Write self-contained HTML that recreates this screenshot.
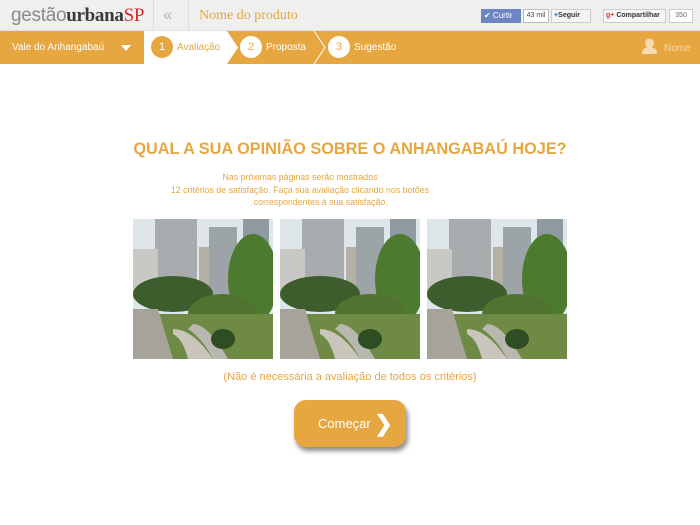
<!DOCTYPE html>
<html><head><meta charset="utf-8"><style>
*{margin:0;padding:0;box-sizing:border-box}
body{width:700px;height:525px;overflow:hidden;background:#fff;font-family:"Liberation Sans",sans-serif;position:relative}
.top{position:absolute;left:0;top:0;width:700px;height:31px;background:#efefef;border-bottom:1px solid #e2e2e2}
.bar{position:absolute;left:0;top:31px;width:700px;height:33px;background:#e6a640}
.abs{position:absolute;white-space:nowrap}
.circ{position:absolute;width:22px;height:22px;border-radius:50%;font-size:11px;text-align:center;line-height:22px}
.photo{position:absolute;top:219px;width:140px;height:140px}
</style></head><body>
<div class="top"></div>
<div class="abs" style="left:11px;top:5px;font-size:19px;letter-spacing:-0.3px"><span style="color:#8a8a8a">gestão</span><span style="color:#3a3a3a;font-family:'Liberation Serif',serif;font-weight:bold">urbana</span><span style="color:#d22a2a;font-family:'Liberation Serif',serif">SP</span></div>
<div class="abs" style="left:153px;top:0;width:1px;height:31px;background:#ddd"></div>
<div class="abs" style="left:163px;top:5px;font-size:17px;color:#c4c4c4;font-weight:bold">«</div>
<div class="abs" style="left:188px;top:0;width:1px;height:31px;background:#ddd"></div>
<div class="abs" style="left:199px;top:8px;font-size:14px;color:#e6a640;font-family:'Liberation Serif',serif">Nome do produto</div>
<div class="abs" style="left:481px;top:9px;width:40px;height:14px;background:#6d86c3;color:#fff;font-size:8px;line-height:14px;padding-left:3px">✔ Curtir</div>
<div class="abs" style="left:523px;top:9px;width:26px;height:14px;border:1px solid #bbb;background:#fff;font-size:7px;line-height:12px;text-align:center;color:#444">43 mil</div>
<div class="abs" style="left:551px;top:9px;width:40px;height:14px;border:1px solid #ccc;background:#f4f4f4;font-size:7px;line-height:12px;font-weight:bold;color:#333;padding-left:2px"><span style="color:#3aa3e3">♥</span>Seguir</div>
<div class="abs" style="left:603px;top:9px;width:63px;height:14px;border:1px solid #ccc;background:#f6f6f6;font-size:7px;line-height:12px;font-weight:bold;color:#333;padding-left:2px"><span style="color:#d33">g+</span> Compartilhar</div>
<div class="abs" style="left:669px;top:9px;width:24px;height:14px;border:1px solid #ccc;background:#fff;font-size:7px;line-height:12px;text-align:center;color:#666">350</div>
<div class="bar"></div>
<div class="abs" style="left:12px;top:42px;font-size:10px;color:#fff">Vale do Anhangabaú</div>
<div class="abs" style="left:121px;top:45px;width:0;height:0;border-left:5px solid transparent;border-right:5px solid transparent;border-top:6px solid #fff"></div>
<svg class="abs" style="left:144px;top:31px" width="200" height="33"><polygon points="0,0 83,0 94,16.5 83,33 0,33" fill="#fff"/><polyline points="170,0 181,16.5 170,33" fill="none" stroke="#fff" stroke-width="1"/></svg>
<div class="circ" style="left:151px;top:36px;background:#e6a640;color:#fff">1</div>
<div class="abs" style="left:177px;top:42px;font-size:10px;color:#e6a640">Avaliação</div>
<div class="circ" style="left:240px;top:36px;background:#fff;color:#e6a640">2</div>
<div class="abs" style="left:266px;top:42px;font-size:10px;color:#fff">Proposta</div>
<div class="circ" style="left:328px;top:36px;background:#fff;color:#e6a640">3</div>
<div class="abs" style="left:354px;top:42px;font-size:10px;color:#fff">Sugestão</div>
<svg class="abs" style="left:642px;top:38px" width="15" height="16"><circle cx="7.5" cy="5" r="4.5" fill="#f6dcb0"/><path d="M0,16 Q0,9 7.5,9 Q15,9 15,16Z" fill="#f6dcb0"/></svg>
<div class="abs" style="left:664px;top:43px;font-size:10px;color:#f6dcb0">Nome</div>
<div class="abs" style="left:0;top:140px;width:700px;text-align:center;font-size:16.3px;font-weight:bold;color:#e6a640">QUAL A SUA OPINIÃO SOBRE O ANHANGABAÚ HOJE?</div>
<div class="abs" style="left:-50px;top:171px;width:700px;text-align:center;font-size:8.8px;line-height:12.5px;color:#e6a640;white-space:normal">Nas próximas páginas serão mostrados<br>12 critérios de satisfação. Faça sua avaliação clicando nos botões<br>&nbsp;&nbsp;&nbsp;&nbsp;&nbsp;&nbsp;&nbsp;&nbsp;&nbsp;&nbsp;&nbsp;&nbsp;&nbsp;&nbsp;&nbsp;&nbsp;&nbsp;correspondentes à sua satisfação.</div>
<svg width="0" height="0" style="position:absolute"><defs><g id="ph">
<rect width="140" height="140" fill="#dfe6ea"/>
<rect x="22" y="0" width="42" height="90" fill="#a9acae"/>
<rect x="0" y="30" width="25" height="50" fill="#c8c8c4"/>
<rect x="66" y="28" width="12" height="70" fill="#b5b0a5"/>
<rect x="76" y="8" width="28" height="90" fill="#9da4a8"/>
<rect x="110" y="0" width="26" height="90" fill="#8f9aa0"/>
<ellipse cx="40" cy="75" rx="40" ry="18" fill="#3d5e2c"/>
<ellipse cx="120" cy="60" rx="25" ry="45" fill="#4c7a2e"/>
<ellipse cx="90" cy="95" rx="35" ry="20" fill="#50742f"/>
<rect x="0" y="95" width="140" height="45" fill="#6f8a44"/>
<path d="M0,90 L25,90 L40,140 L0,140Z" fill="#a6a39b"/>
<path d="M40,110 Q60,110 80,140 L55,140 Q50,120 40,115Z" fill="#c9c5bb"/>
<path d="M60,105 Q75,105 95,140 L80,140 Q70,120 55,110Z" fill="#b8b8b0"/>
<ellipse cx="90" cy="120" rx="12" ry="10" fill="#2f4d22"/>
</g></defs></svg>
<svg class="photo" style="left:133px"><use href="#ph"/></svg>
<svg class="photo" style="left:280px"><use href="#ph"/></svg>
<svg class="photo" style="left:427px"><use href="#ph"/></svg>
<div class="abs" style="left:0;top:371px;width:700px;text-align:center;font-size:11px;color:#e6a640">(Não é necessária a avaliação de todos os critérios)</div>
<div class="abs" style="left:294px;top:400px;width:112px;height:47px;border-radius:12px;background:#e6a640;box-shadow:2px 4px 5px rgba(0,0,0,0.45);color:#fff;font-size:13px;line-height:47px;padding-left:24px">Começar <span style="font-size:22px;font-weight:bold;vertical-align:-3px">❯</span></div>
</body></html>
